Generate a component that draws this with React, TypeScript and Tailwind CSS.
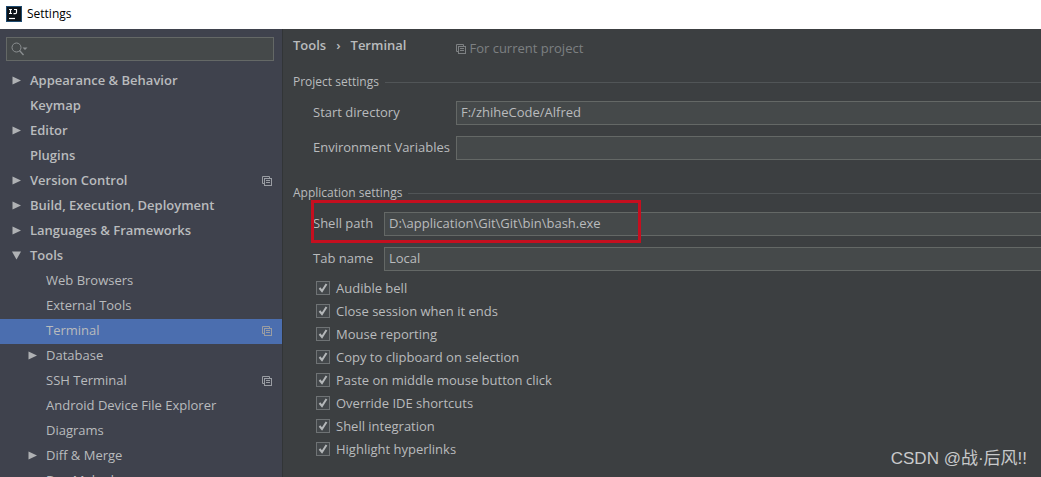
import { useState } from 'react';

type TreeItem = {
  label: string;
  level: 0 | 1;
  arrow?: 'closed' | 'open';
  project?: boolean;
};

const TREE: TreeItem[] = [
  { label: 'Appearance & Behavior', level: 0, arrow: 'closed' },
  { label: 'Keymap', level: 0 },
  { label: 'Editor', level: 0, arrow: 'closed' },
  { label: 'Plugins', level: 0 },
  { label: 'Version Control', level: 0, arrow: 'closed', project: true },
  { label: 'Build, Execution, Deployment', level: 0, arrow: 'closed' },
  { label: 'Languages & Frameworks', level: 0, arrow: 'closed' },
  { label: 'Tools', level: 0, arrow: 'open' },
  { label: 'Web Browsers', level: 1 },
  { label: 'External Tools', level: 1 },
  { label: 'Terminal', level: 1, project: true },
  { label: 'Database', level: 1, arrow: 'closed' },
  { label: 'SSH Terminal', level: 1, project: true },
  { label: 'Android Device File Explorer', level: 1 },
  { label: 'Diagrams', level: 1 },
  { label: 'Diff & Merge', level: 1, arrow: 'closed' },
  { label: 'Doc Maked', level: 1 },
];

const OPTIONS = [
  'Audible bell',
  'Close session when it ends',
  'Mouse reporting',
  'Copy to clipboard on selection',
  'Paste on middle mouse button click',
  'Override IDE shortcuts',
  'Shell integration',
  'Highlight hyperlinks',
];

function Logo() {
  return (
    <svg width="16" height="16" viewBox="0 0 16 16" className="shrink-0">
      <rect width="16" height="16" fill="#1d4a70" />
      <rect x="1" y="1" width="14" height="14" fill="#0b1218" />
      <path d="M3 3.5h3M4.5 3.5v4M3 7.5h3M8 3.5h2.5v3q0 1.2-1.2 1.2H7.5" fill="none" stroke="#fff" strokeWidth="1.2" />
      <path d="M3 12.5h6" stroke="#fff" strokeWidth="1.2" />
    </svg>
  );
}

function ProjectIcon() {
  return (
    <svg width="10" height="10" viewBox="0 0 10 10" fill="none" stroke="currentColor" className="shrink-0">
      <path d="M2.5 7.5h-2v-7h7v2" />
      <rect x="2.5" y="2.5" width="7" height="7" />
      <path d="M4 4.5h4M4 6.5h4" />
    </svg>
  );
}

function Arrow({ open }: { open: boolean }) {
  return (
    <svg width="9" height="9" viewBox="0 0 9 9" fill="#afb1b4" className="shrink-0">
      <path d={open ? 'M0 0.5h9L4.5 8.5z' : 'M0.5 0.5v8L9 4.5z'} />
    </svg>
  );
}

function Separator({ title }: { title: string }) {
  return (
    <div className="flex items-center gap-1.5">
      <h3 className="text-xs leading-5">{title}</h3>
      <div className="h-px flex-1 bg-[#515557]" />
    </div>
  );
}

type FieldProps = { id: string; label: string; labelClass: string; initial: string };

function Field({ id, label, labelClass, initial }: FieldProps) {
  const [value, setValue] = useState(initial);
  return (
    <div className="flex items-center pl-5">
      <label htmlFor={id} className={`shrink-0 ${labelClass}`}>{label}</label>
      <input
        id={id}
        type="text"
        value={value}
        onChange={(e) => setValue(e.target.value)}
        className="h-6 min-w-0 flex-1 border border-r-0 border-[#646866] bg-[#45494a] px-1 pb-0.5 outline-none"
      />
    </div>
  );
}

function Option({ label }: { label: string }) {
  const [checked, setChecked] = useState(true);
  return (
    <label className="flex h-[23px] items-center gap-1.5">
      <span className="mb-0.5 grid h-3.5 w-3.5 shrink-0">
        <input
          type="checkbox"
          checked={checked}
          onChange={() => setChecked(!checked)}
          className="col-start-1 row-start-1 h-3.5 w-3.5 appearance-none border border-[#6f7375] bg-[#43474a]"
        />
        {checked && (
          <svg viewBox="0 0 14 14" fill="none" stroke="#b4b7b9" strokeWidth="2" className="pointer-events-none col-start-1 row-start-1 h-3.5 w-3.5">
            <path d="M3.5 7l2.5 3 4.5-7" />
          </svg>
        )}
      </span>
      {label}
    </label>
  );
}

function Sidebar() {
  const [selected, setSelected] = useState('Terminal');
  return (
    <aside className="flex w-[283px] shrink-0 flex-col border-r border-[#323537] bg-[#3f424d]">
      <div className="my-2 mr-2 ml-1.5 flex h-6 shrink-0 items-center border border-[#646866] bg-[#45494a] pl-1">
        <svg width="17" height="14" viewBox="0 0 17 14" fill="none" stroke="#8b8f91" className="shrink-0">
          <circle cx="5.5" cy="5.5" r="4.5" />
          <path d="M8.5 8.5l4 4.5" strokeWidth="1.3" />
          <path d="M11.5 5.5h5L14 8z" fill="#8b8f91" stroke="none" />
        </svg>
        <input type="text" aria-label="Search settings" className="min-w-0 flex-1 px-1 outline-none" />
      </div>
      <nav className="min-h-0 flex-1 overflow-hidden">
        {TREE.map((item) => (
          <button
            key={item.label}
            onClick={() => setSelected(item.label)}
            className={`flex h-[25px] w-full items-center pr-2.5 pb-0.5 text-left ${item.level ? 'pl-7' : 'pl-3 font-semibold'} ${
              selected === item.label ? 'bg-[#4b6eaf]' : ''
            }`}
          >
            <span className="w-[18px] shrink-0">{item.arrow && <Arrow open={item.arrow === 'open'} />}</span>
            <span className="flex-1 whitespace-nowrap">{item.label}</span>
            {item.project && <span className="text-[#9a9da3]"><ProjectIcon /></span>}
          </button>
        ))}
      </nav>
    </aside>
  );
}

export default function App() {
  return (
    <div className="flex h-screen flex-col overflow-hidden bg-[#3c3f41] font-['Open_Sans',sans-serif] text-[13px] text-[#b9bbbd]">
      <header className="flex h-[29px] shrink-0 items-center gap-[5px] bg-white pb-0.5 pl-1.5 text-xs text-black">
        <Logo />
        <h1>Settings</h1>
      </header>

      <div className="flex min-h-0 flex-1">
        <Sidebar />

        <main className="min-w-0 flex-1 pt-[5px] pl-2.5">
          <div className="flex h-6 items-center">
            <h2 className="flex gap-2.5 font-semibold">
              <span>Tools</span>
              <span>›</span>
              <span>Terminal</span>
            </h2>
            <p className="flex items-center gap-[3px] pt-1.5 pl-[50px] text-[#7d8082]">
              <ProjectIcon />
              For current project
            </p>
          </div>

          <section className="mt-3.5">
            <Separator title="Project settings" />
            <div className="mt-[9px] flex flex-col gap-[11px]">
              <Field id="start-dir" label="Start directory" labelClass="w-[143px]" initial="F:/zhiheCode/Alfred" />
              <Field id="env" label="Environment Variables" labelClass="w-[143px]" initial="" />
            </div>
          </section>

          <section className="mt-[23px]">
            <Separator title="Application settings" />
            <div className="relative mt-[9px] flex flex-col gap-[11px]">
              <Field id="shell-path" label="Shell path" labelClass="w-[71px]" initial="D:\application\Git\Git\bin\bash.exe" />
              <Field id="tab-name" label="Tab name" labelClass="w-[71px]" initial="Local" />
              <div className="pointer-events-none absolute -top-3 left-[18px] h-[43px] w-[330px] border-[3px] border-[#c50f1f]" />
            </div>
            <div className="mt-1.5 pl-[23px]">
              {OPTIONS.map((label) => <Option key={label} label={label} />)}
            </div>
          </section>
        </main>
      </div>

      <p className="absolute right-3.5 bottom-1.5 font-['Liberation_Sans','Noto_Sans_CJK_SC',sans-serif] text-[17px] leading-6 text-[#c9cacb]">
        CSDN @战·后风!!
      </p>
    </div>
  );
}
